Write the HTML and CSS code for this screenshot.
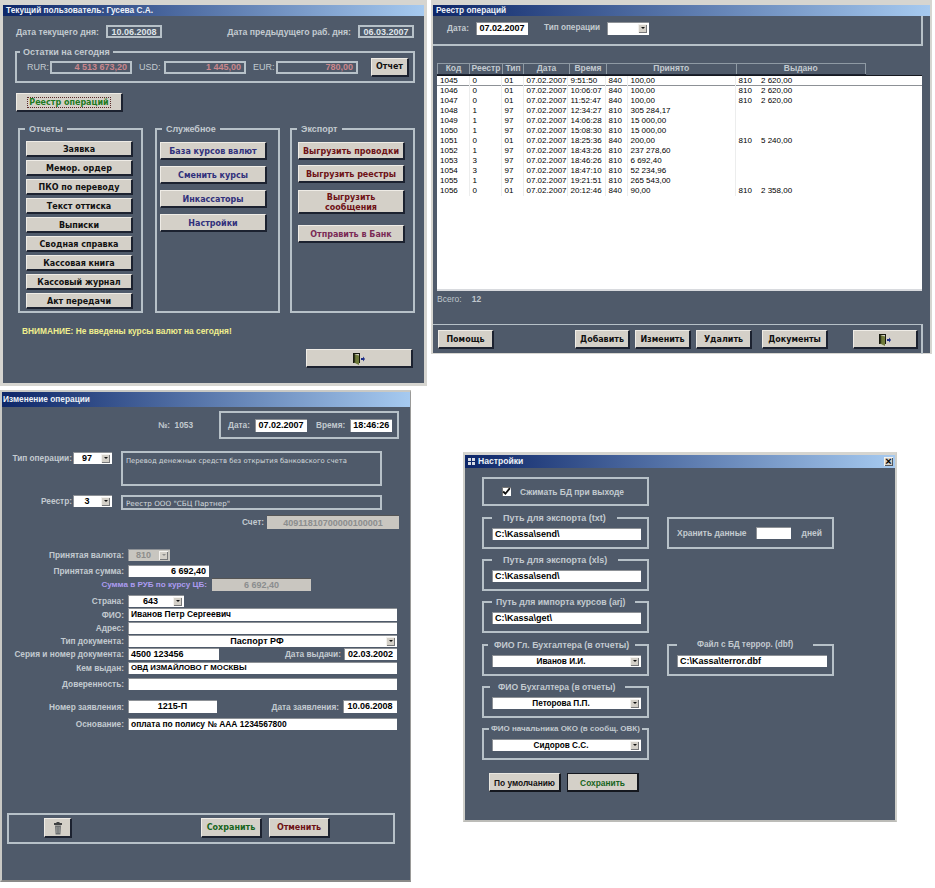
FILE: index.html
```html
<!DOCTYPE html>
<html lang="ru">
<head>
<meta charset="utf-8">
<title>Касса</title>
<link rel="stylesheet" href="styles.css">
</head>
<body>

<section class="win win-main">
  <div class="title">Текущий пользователь: Гусева С.А.</div>
  <div class="main-dates">
    <span class="lbl">Дата текущего дня:</span>
    <span class="ro ro-date">10.06.2008</span>
    <span class="lbl main-prev">Дата предыдущего раб. дня:</span>
    <span class="ro ro-date">06.03.2007</span>
  </div>
  <div class="group main-rest">
    <span class="legend legend-rest">Остатки на сегодня</span>
    <span class="lbl cur cur-a">RUR:</span><span class="ro ro-money">4 513 673,20</span>
    <span class="lbl cur cur-b">USD:</span><span class="ro ro-money">1 445,00</span>
    <span class="lbl cur cur-a">EUR:</span><span class="ro ro-money">780,00</span>
    <button class="btn rest-btn">Отчет</button>
  </div>
  <button class="btn reg-btn"><span class="focus">Реестр операций</span></button>
  <div class="main-groups">
    <div class="group col col-rep">
      <span class="legend legend-col">Отчеты</span>
      <button class="btn">Заявка</button>
      <button class="btn">Мемор. ордер</button>
      <button class="btn">ПКО по переводу</button>
      <button class="btn">Текст оттиска</button>
      <button class="btn">Выписки</button>
      <button class="btn">Сводная справка</button>
      <button class="btn">Кассовая книга</button>
      <button class="btn">Кассовый журнал</button>
      <button class="btn">Акт передачи</button>
    </div>
    <div class="group col col-srv">
      <span class="legend legend-col">Служебное</span>
      <button class="btn blue">База курсов валют</button>
      <button class="btn blue">Сменить курсы</button>
      <button class="btn blue">Инкассаторы</button>
      <button class="btn blue">Настройки</button>
    </div>
    <div class="group col col-exp">
      <span class="legend legend-col">Экспорт</span>
      <button class="btn red">Выгрузить проводки</button>
      <button class="btn red">Выгрузить реестры</button>
      <button class="btn red tall">Выгрузить<br>сообщения</button>
      <button class="btn plum send">Отправить в Банк</button>
    </div>
  </div>
  <p class="warn">ВНИМАНИЕ: Не введены курсы валют на сегодня!</p>
  <button class="btn exit main-exit" aria-label="Выход">
    <svg class="door" viewBox="0 0 12 12"><path d="M0 0h7v10H6V1H1v9H0z" fill="#17190f"/><path d="M1 1l5 1.500V12L1 9.500z" fill="#6f7a3a"/><path d="M1 1l1.200.4V10L1 9.500z" fill="#2a3016"/><path d="M8 5h2V3.500L12 6l-2 2.500V7H8z" fill="#1c2c86"/></svg>
  </button>
</section>

<section class="win win-reg">
  <div class="title">Реестр операций</div>
  <div class="reg-top">
    <span class="lbl">Дата:</span>
    <span class="field date reg-date">07.02.2007</span>
    <span class="lbl reg-type">Тип операции</span>
    <span class="combo reg-combo"><span class="combo-text"></span><span class="arrow"></span></span>
  </div>
  <table class="grid grid-head">
    <tr><th>Код</th><th>Реестр</th><th>Тип</th><th>Дата</th><th>Время</th><th>Принято</th><th>Выдано</th></tr>
  </table>
  <div class="list">
    <table class="grid grid-body">
      <tr class="sel"><td>1045</td><td>0</td><td>01</td><td>07.02.2007</td><td>9:51:50</td><td>840</td><td>100,00</td><td>810</td><td>2 620,00</td></tr>
      <tr><td>1046</td><td>0</td><td>01</td><td>07.02.2007</td><td>10:06:07</td><td>840</td><td>100,00</td><td>810</td><td>2 620,00</td></tr>
      <tr><td>1047</td><td>0</td><td>01</td><td>07.02.2007</td><td>11:52:47</td><td>840</td><td>100,00</td><td>810</td><td>2 620,00</td></tr>
      <tr><td>1048</td><td>1</td><td>97</td><td>07.02.2007</td><td>12:34:27</td><td>810</td><td>305 284,17</td><td></td><td></td></tr>
      <tr><td>1049</td><td>1</td><td>97</td><td>07.02.2007</td><td>14:06:28</td><td>810</td><td>15 000,00</td><td></td><td></td></tr>
      <tr><td>1050</td><td>1</td><td>97</td><td>07.02.2007</td><td>15:08:30</td><td>810</td><td>15 000,00</td><td></td><td></td></tr>
      <tr><td>1051</td><td>0</td><td>01</td><td>07.02.2007</td><td>18:25:36</td><td>840</td><td>200,00</td><td>810</td><td>5 240,00</td></tr>
      <tr><td>1052</td><td>1</td><td>97</td><td>07.02.2007</td><td>18:43:26</td><td>810</td><td>237 278,60</td><td></td><td></td></tr>
      <tr><td>1053</td><td>3</td><td>97</td><td>07.02.2007</td><td>18:46:26</td><td>810</td><td>6 692,40</td><td></td><td></td></tr>
      <tr><td>1054</td><td>3</td><td>97</td><td>07.02.2007</td><td>18:47:10</td><td>810</td><td>52 234,96</td><td></td><td></td></tr>
      <tr><td>1055</td><td>1</td><td>97</td><td>07.02.2007</td><td>19:21:51</td><td>810</td><td>265 543,00</td><td></td><td></td></tr>
      <tr><td>1056</td><td>0</td><td>01</td><td>07.02.2007</td><td>20:12:46</td><td>840</td><td>90,00</td><td>810</td><td>2 358,00</td></tr>
    </table>
  </div>
  <div class="total"><span>Всего:</span><span class="total-n">12</span></div>
  <div class="reg-bottom">
    <button class="btn b-help">Помощь</button>
    <button class="btn b-add">Добавить</button>
    <button class="btn b-edit">Изменить</button>
    <button class="btn b-del">Удалить</button>
    <button class="btn b-docs">Документы</button>
    <button class="btn exit b-exit" aria-label="Выход">
      <svg class="door" viewBox="0 0 12 12"><path d="M0 0h7v10H6V1H1v9H0z" fill="#17190f"/><path d="M1 1l5 1.500V12L1 9.500z" fill="#6f7a3a"/><path d="M1 1l1.200.4V10L1 9.500z" fill="#2a3016"/><path d="M8 5h2V3.500L12 6l-2 2.500V7H8z" fill="#1c2c86"/></svg>
    </button>
  </div>
</section>

<section class="win win-edit">
  <div class="title">Изменение операции</div>
  <div class="e-head">
    <span class="lbl e-num">№:&nbsp; 1053</span>
    <div class="group e-stamp">
      <span class="lbl">Дата:</span><span class="field date e-d">07.02.2007</span>
      <span class="lbl e-tl">Время:</span><span class="field date e-t">18:46:26</span>
    </div>
  </div>
  <div class="row e-type">
    <span class="lbl w70">Тип операции:</span>
    <span class="combo c39"><span class="combo-text">97</span><span class="arrow"></span></span>
    <div class="group e-desc"><span class="small">Перевод денежных средств без открытия банковского счета</span></div>
  </div>
  <div class="row e-reg">
    <span class="lbl w70">Реестр:</span>
    <span class="combo c39"><span class="combo-text">3</span><span class="arrow"></span></span>
    <div class="group e-desc2"><span class="small small-wide">Реестр ООО "СБЦ Партнер"</span></div>
  </div>
  <div class="row h14 mt5">
    <span class="lbl w262">Счет:</span>
    <span class="ro-grey e-acc">40911810700000100001</span>
  </div>
  <div class="row h12 mt20">
    <span class="lbl w122">Принятая валюта:</span>
    <span class="combo c42 off"><span class="combo-text">810</span><span class="arrow"></span></span>
  </div>
  <div class="row h12 mt4">
    <span class="lbl w122">Принятая сумма:</span>
    <span class="field right w81">6 692,40</span>
  </div>
  <div class="row h13 mt1">
    <span class="lbl lilac w205">Сумма в РУБ по курсу ЦБ:</span>
    <span class="ro-grey right w99">6 692,40</span>
  </div>
  <div class="row h12 mt4">
    <span class="lbl w122">Страна:</span>
    <span class="combo c56"><span class="combo-text">643</span><span class="arrow"></span></span>
  </div>
  <div class="row h13 mt1">
    <span class="lbl w122">ФИО:</span>
    <span class="field wide txt">Иванов Петр Сергеевич</span>
  </div>
  <div class="row h12 mt1">
    <span class="lbl w122">Адрес:</span>
    <span class="field wide"></span>
  </div>
  <div class="row h12 mt1">
    <span class="lbl w122">Тип документа:</span>
    <span class="combo wide"><span class="combo-text">Паспорт РФ</span><span class="arrow"></span></span>
  </div>
  <div class="row row-split h12 mt1">
    <span class="lbl w122">Серия и номер документа:</span>
    <span class="field w91">4500 123456</span>
    <span class="lbl e-issued">Дата выдачи:</span>
    <span class="field w53 center">02.03.2002</span>
  </div>
  <div class="row h12 mt2">
    <span class="lbl w122">Кем выдан:</span>
    <span class="field wide caps">ОВД ИЗМАЙЛОВО Г МОСКВЫ</span>
  </div>
  <div class="row h12 mt4">
    <span class="lbl w122">Доверенность:</span>
    <span class="field wide"></span>
  </div>
  <div class="row row-split h13 mt10">
    <span class="lbl w122">Номер заявления:</span>
    <span class="field w89 center">1215-П</span>
    <span class="lbl e-app">Дата заявления:</span>
    <span class="field w54 center">10.06.2008</span>
  </div>
  <div class="row h12 mt5">
    <span class="lbl w122">Основание:</span>
    <span class="field wide txt">оплата по полису № ААА 1234567800</span>
  </div>
  <div class="group e-foot">
    <button class="btn e-trash" aria-label="Удалить">
      <svg viewBox="0 0 10 13" class="trash"><path d="M3.500 0h3v1H9v2H1V1h2.500z" fill="#3f4142"/><path d="M2 3.500h6l-.6 9H2.600z" fill="#6d7072"/><path d="M3.600 5v6M5 5v6M6.400 5v6" stroke="#a8aaa8" stroke-width=".6"/></svg>
    </button>
    <button class="btn green e-save">Сохранить</button>
    <button class="btn red e-cancel">Отменить</button>
  </div>
</section>

<section class="win win-set">
  <div class="title set-title">
    <svg class="set-ico" viewBox="0 0 7 7"><path d="M0 0h3v3H0zM4 0h3v3H4zM0 4h3v3H0zM4 4h3v3H4z" fill="#d8dce4"/></svg>
    <span>Настройки</span>
    <span class="close">×</span>
  </div>
  <div class="set-body">
    <div class="set-left">
      <div class="group set-check">
        <span class="check"><svg viewBox="0 0 8 8"><path d="M1 4l2 2 4-5" fill="none" stroke="#111" stroke-width="1.600"/></svg></span>
        <span class="lbl">Сжимать БД при выходе</span>
      </div>
      <div class="group set-g"><span class="legend l-txt">Путь для экспорта (txt)</span><span class="field w149">C:\Kassa\send\</span></div>
      <div class="group set-g"><span class="legend l-txt">Путь для экспорта (xls)</span><span class="field w149">C:\Kassa\send\</span></div>
      <div class="group set-g"><span class="legend l-imp">Путь для импорта курсов (arj)</span><span class="field w149">C:\Kassa\get\</span></div>
      <div class="group set-g gap11"><span class="legend l-chief">ФИО Гл. Бухгалтера (в отчеты)</span><span class="combo w149"><span class="combo-text">Иванов И.И.</span><span class="arrow"></span></span></div>
      <div class="group set-g"><span class="legend l-acc">ФИО Бухгалтера (в отчеты)</span><span class="combo w149"><span class="combo-text">Петорова П.П.</span><span class="arrow"></span></span></div>
      <div class="group set-g"><span class="legend l-oko">ФИО начальника ОКО (в сообщ. ОВК)</span><span class="combo w149"><span class="combo-text">Сидоров С.С.</span><span class="arrow"></span></span></div>
      <div class="set-btns">
        <button class="btn dark">По умолчанию</button>
        <button class="btn dark green set-save">Сохранить</button>
      </div>
    </div>
    <div class="set-right">
      <div class="group set-keep">
        <span class="lbl">Хранить данные</span>
        <span class="field w35"></span>
        <span class="lbl">дней</span>
      </div>
      <div class="group set-file">
        <span class="legend l-file">Файл с БД террор. (dbf)</span>
        <span class="field w150">C:\Kassa\terror.dbf</span>
      </div>
    </div>
  </div>
</section>

</body>
</html>
```

FILE: styles.css
```css
* { box-sizing: border-box; }
html, body { margin: 0; padding: 0; }
body {
  width: 935px;
  height: 888px;
  position: relative;
  overflow: hidden;
  background: #fff;
  font-family: "Liberation Sans", Arial, sans-serif;
  font-size: 9px;
  color: #000;
}

/* windows on the desktop */
.win {
  position: absolute;
  background: #4f5a6a;
  border-style: solid;
  border-color: #d6d5d0;
  display: flex;
  flex-direction: column;
}
.win-main { left: 0; top: 0; width: 427px; height: 386px; border-width: 5px 3px 3px 3px; }
.win-reg  { left: 431px; top: 0; width: 501px; height: 354px; border-width: 5px 2px 1px 2px; }
.win-edit { left: 0; top: 390px; width: 411px; height: 492px; border-width: 2px 1px 2px 2px; border-color: #c9c9c5 #9a9a98 #8a8a88 #c9c9c5; }
.win-set  { left: 463px; top: 452px; width: 434px; height: 370px; border-width: 3px 2px 2px 2px; border-color: #d6d5d0 #cfcfca #bcbcb8 #cfcfca; }

.title {
  flex: none;
  height: 11px;
  line-height: 11px;
  padding-left: 3px;
  color: #eef2f8;
  font-weight: bold;
  font-size: 8.300px;
  background: linear-gradient(90deg, #0d2668, #a6caf0);
}
.win-edit .title { height: 15px; line-height: 15px; padding-left: 1px; }

/* shared controls */
.lbl { color: #c3cad0; font-weight: bold; font-size: 8.300px; white-space: nowrap; line-height: 12px; }
.win-main .lbl { font-size: 8.700px; }
.win-set .lbl { font-size: 8.450px; }
.lilac { color: #ac9cf0; font-size: 8.100px; }
.small { color: #d5dade; font-family: "DejaVu Sans", sans-serif; font-size: 6.800px; line-height: 10px; white-space: nowrap; }
.small-wide { font-size: 7.200px; }
.group { position: relative; border: 2px solid #b7c1c8; }
.legend {
  position: absolute;
  top: -7px;
  line-height: 12px;
  padding: 0 6px;
  color: #c3cad0;
  font-weight: bold;
  white-space: nowrap;
  background: #4f5a6a;
}
.btn {
  display: flex;
  align-items: center;
  justify-content: center;
  padding: 1px 0 0;
  margin: 0;
  text-align: center;
  font-family: "DejaVu Sans", sans-serif;
  font-weight: bold;
  font-size: 8px;
  line-height: 10px;
  color: #111;
  background: #d4d0c8;
  border: 1px solid;
  border-color: #efece6 #1c2230 #1c2230 #efece6;
  border-width: 1px 2px 2px 1px;
}
.blue { color: #31307c; }
.red { color: #6e1216; }
.plum { color: #7a2a55; }
.green { color: #17641c; }
.dark { border-color: #e8e6e0 #15181f #15181f #e8e6e0; font-family: "Liberation Sans", sans-serif; font-size: 8.400px; }
.set-save { border-color: #15181f; }
.field, .combo {
  display: flex;
  align-items: center;
  background: #fff;
  color: #000;
  font-weight: bold;
  padding: 0 3px 1px;
  box-shadow: inset 1px 1px 0 #8d9196;
  white-space: nowrap;
  height: 100%;
}
.txt { font-size: 8.450px; }
.caps { font-size: 7.800px; }
.center { justify-content: center; }
.right { justify-content: flex-end; }
.combo { padding: 0 2px 0 0; }
.combo-text { flex: 1; text-align: center; }
.arrow {
  flex: none;
  width: 9px;
  height: 9px;
  display: flex;
  align-items: center;
  justify-content: center;
  background: #d4d0c8;
  box-shadow: inset 1px 1px 0 #f4f2ee, inset -1px -1px 0 #77787a;
}
.arrow::after {
  content: "";
  border-style: solid;
  border-width: 2px 2px 0 2px;
  border-color: #111 transparent transparent;
}
.off { background: #c8c6c0; color: #8e8e8c; }
.off .arrow::after { border-top-color: #8e8e8c; }
.ro {
  display: flex;
  align-items: center;
  justify-content: center;
  border: 2px solid #b7c1c8;
  color: #dfe4e8;
  font-weight: bold;
  white-space: nowrap;
}
.ro-grey {
  display: flex;
  align-items: center;
  justify-content: center;
  background: #c9c6c0;
  color: #8b8d8e;
  font-weight: bold;
  padding: 0 4px;
  border-top: 1px solid #555;
  height: 100%;
}
.door { width: 12px; height: 12px; }

/* main window */
.main-dates { display: flex; align-items: center; height: 13px; margin: 9px 10px 0 13px; }
.main-dates .lbl + .ro { margin-left: 7px; }
.ro-date { width: 56px; height: 13px; font-size: 9px; }
.main-prev { margin-left: auto; }
.main-rest {
  display: flex;
  align-items: center;
  width: 400px;
  height: 32px;
  margin: 13px 0 0 12px;
  padding-left: 10px;
}
.legend-rest { left: 3px; padding: 0 3px; }
.win-main .cur { font-weight: normal; font-size: 9px; }
.cur-a { width: 23px; }
.cur-b { width: 25px; }
.ro-money {
  width: 82px;
  height: 13px;
  justify-content: flex-end;
  padding-right: 3px;
  margin-right: 7px;
  color: #c9868c;
}
.rest-btn { width: 38px; height: 19px; margin-left: 6px; }
.reg-btn { width: 107px; height: 19px; margin: 10px 0 0 13px; color: #1e7a22; }
.focus { border: 1px dotted #5a2a2a; padding: 0 1px; line-height: 9px; }
.main-groups { display: flex; margin: 16px 0 0 15px; gap: 12px; height: 185px; }
.col { width: 125px; height: 185px; display: flex; flex-direction: column; }
.legend-col { left: 5px; padding: 0 4px; }
.col-rep { padding: 11px 0 0 6px; gap: 3px; }
.col-rep .btn { width: 107px; height: 16px; padding-top: 2px; }
.col-srv { padding: 12px 0 0 3px; gap: 6px; margin-right: -2px; }
.col-exp { padding: 12px 0 0 6px; }
.col-srv .btn, .col-exp .btn { width: 107px; height: 18px; flex: none; padding-top: 2px; }
.col-exp .btn + .btn { margin-top: 5px; }
.col-exp .btn.tall { height: 24px; margin-top: 7px; }
.col-exp .btn.send { margin-top: 11px; }
.warn { margin: 12px 0 0 19px; color: #f0ee8e; font-weight: bold; font-size: 8.350px; line-height: 12px; }
.main-exit { width: 107px; height: 19px; margin: 12px 0 0 303px; }

/* register window */
.reg-top {
  display: flex;
  align-items: center;
  height: 30px;
  width: 490px;
  padding: 0 0 4px 14px;
  border-right: 2px solid #b7c1c8;
  border-bottom: 2px solid #b7c1c8;
  flex: none;
}
.date { justify-content: center; }
.reg-date { width: 52px; height: 13px; margin-left: 7px; }
.win-reg .reg-type { margin-left: 16px; font-size: 8.200px; }
.reg-combo { width: 42px; height: 13px; margin-left: 7px; }
.grid { border-collapse: collapse; table-layout: fixed; flex: none; }
.grid-head { width: 429px; margin: 17px 0 0 4px; color: #c3cad0; }
.grid-head th {
  height: 11px;
  padding: 0 0 1px;
  font-size: 8.500px;
  font-weight: bold;
  line-height: 9px;
  border: 1px solid #8f9aa4;
  border-bottom-color: #1c2230;
}
.grid-head th:nth-child(1) { width: 32px; }
.grid-head th:nth-child(2) { width: 33px; }
.grid-head th:nth-child(3) { width: 21px; }
.grid-head th:nth-child(4) { width: 46px; }
.grid-head th:nth-child(5) { width: 37px; }
.list {
  flex: none;
  width: 485px;
  height: 216px;
  margin-left: 4px;
  background: #fff;
  border-top: 1px solid #15181f;
  border-bottom: 2px solid #d8dade;
}
.grid-body { width: 485px; font-size: 8px; }
.grid-body td {
  height: 10px;
  padding: 0 0 0 3px;
  line-height: 9px;
  vertical-align: top;
  white-space: nowrap;
  overflow: hidden;
  border-right: 1px solid #eceded;
}
.grid-body td:last-child, .grid-body td:nth-child(8) { border-right: 0; }
.grid-body td:nth-child(1) { width: 32px; }
.grid-body td:nth-child(2) { width: 32px; }
.grid-body td:nth-child(3) { width: 22px; }
.grid-body td:nth-child(4) { width: 44px; }
.grid-body td:nth-child(5) { width: 38px; }
.grid-body td:nth-child(6) { width: 22px; }
.grid-body td:nth-child(7) { width: 108px; }
.grid-body td:nth-child(8) { width: 23px; }
.sel td { box-shadow: inset 0 -1px 0 #8d9196; }
.total { display: flex; gap: 10px; margin: 2px 0 0 4px; color: #bfc6cc; font-size: 8.500px; line-height: 12px; height: 12px; flex: none; }
.total-n { font-weight: bold; }
.reg-bottom {
  flex: none;
  display: flex;
  width: 490px;
  height: 30px;
  margin-top: 19px;
  padding: 5px 0 0 5px;
  border-top: 1px solid #b7c1c8;
  border-right: 2px solid #b7c1c8;
}
.reg-bottom .btn { height: 19px; }
.b-help { width: 56px; }
.b-add { width: 55px; margin-left: 81px; }
.b-edit { width: 56px; margin-left: 5px; }
.b-del { width: 56px; margin-left: 5px; }
.b-docs { width: 66px; margin-left: 10px; }
.b-exit { width: 65px; margin-left: 25px; }

/* edit window */
.row { display: flex; flex: none; align-items: center; }
.h12 { height: 12px; } .h13 { height: 13px; } .h14 { height: 14px; }
.mt1 { margin-top: 1px; } .mt2 { margin-top: 2px; } .mt4 { margin-top: 4px; } .mt5 { margin-top: 5px; }
.mt10 { margin-top: 10px; } .mt20 { margin-top: 20px; }
.row > .lbl { text-align: right; }
.w70 { width: 70px; } .w122 { width: 122px; margin-right: 4px; } .w205 { width: 205px; margin-right: 5px; } .w262 { width: 262px; margin-right: 3px; }
.e-head { display: flex; align-items: center; height: 28px; margin: 4px 11px 0 156px; flex: none; }
.e-num { flex: 1; }
.e-stamp { display: flex; align-items: center; width: 180px; height: 28px; padding-left: 7px; }
.e-d { width: 52px; height: 13px; margin-left: 5px; }
.e-tl { margin-left: 9px; }
.e-t { width: 42px; height: 13px; margin-left: 5px; }
.e-type { margin-top: 12px; height: 35px; align-items: flex-start; }
.e-type .lbl { margin-top: 1px; }
.e-reg { margin-top: 9px; height: 15px; align-items: flex-start; }
.c39 { width: 39px; height: 12px; margin-left: 1px; }
.c42 { width: 42px; }
.c56 { width: 56px; }
.e-type .c39 { margin-top: 1px; }
.e-desc { width: 261px; height: 35px; margin-left: 9px; padding: 2px 3px 0; }
.e-desc2 { width: 261px; height: 15px; margin-left: 9px; padding: 1px 3px 0; }
.e-acc { width: 132px; }
.w81 { width: 81px; } .w99 { width: 99px; } .w91 { width: 91px; } .w89 { width: 89px; } .w53 { width: 53px; } .w54 { width: 54px; }
.wide { width: 269px; }
.row-split { width: 395px; }
.e-issued { margin-left: auto; margin-right: 3px; }
.e-app { margin-left: auto; margin-right: 4px; }
.e-foot { display: flex; width: 388px; height: 31px; margin: 83px 0 0 5px; padding: 3px 0 0 35px; flex: none; }
.e-foot .btn { height: 20px; }
.e-trash { width: 28px; }
.trash { width: 10px; height: 13px; }
.e-save { width: 61px; margin-left: 129px; }
.e-cancel { width: 61px; margin-left: 7px; }

/* settings window */
.set-title { height: 13px; line-height: 13px; display: flex; align-items: center; gap: 3px; padding-left: 3px; font-size: 8.600px; }
.set-ico { width: 7px; height: 7px; }
.close {
  margin-left: auto;
  margin-right: 2px;
  width: 9px;
  height: 9px;
  line-height: 8px;
  text-align: center;
  color: #000;
  font-size: 11px;
  background: #d4d0c8;
  box-shadow: inset 1px 1px 0 #f4f2ee, inset -1px -1px 0 #55585c;
}
.set-body { display: flex; padding: 9px 0 0 17px; gap: 18px; }
.set-left { width: 167px; display: flex; flex-direction: column; }
.set-check { display: flex; align-items: center; height: 29px; padding-left: 18px; gap: 9px; }
.check { width: 9px; height: 9px; background: #fff; display: flex; box-shadow: inset 1px 1px 0 #777; }
.set-g { height: 32px; margin-top: 10px; padding: 9px 0 0 8px; flex: none; }
.set-g .field, .set-g .combo { height: 12px; }
.set-g .combo-text { font-size: 8.200px; }
.set-check + .set-g { margin-top: 11px; }
.set-g.gap11 { margin-top: 11px; }
.w149 { width: 149px; }
.l-txt { left: 8px; padding: 0 11px; }
.l-imp { left: 8px; padding: 0 10px 0 4px; font-size: 8.700px; }
.l-chief { left: 4px; font-size: 8.800px; }
.l-acc { left: 6px; padding: 0 10px 0 8px; font-size: 8.600px; }
.l-oko { left: 5px; padding: 0 2px; font-size: 8px; }
.set-btns { display: flex; gap: 6px; margin: 13px 0 0 7px; }
.set-btns .btn { width: 72px; height: 19px; }
.set-right { width: 167px; display: flex; flex-direction: column; }
.set-keep { display: flex; align-items: center; height: 32px; margin-top: 40px; padding-left: 8px; flex: none; }
.w35 { width: 35px; height: 12px; margin: 0 11px 0 9px; }
.set-file { height: 32px; margin-top: 95px; padding: 9px 0 0 8px; flex: none; }
.set-file .field { height: 12px; }
.w150 { width: 150px; }
.l-file { left: 8px; padding: 0 20px; font-size: 8.200px; }
```
